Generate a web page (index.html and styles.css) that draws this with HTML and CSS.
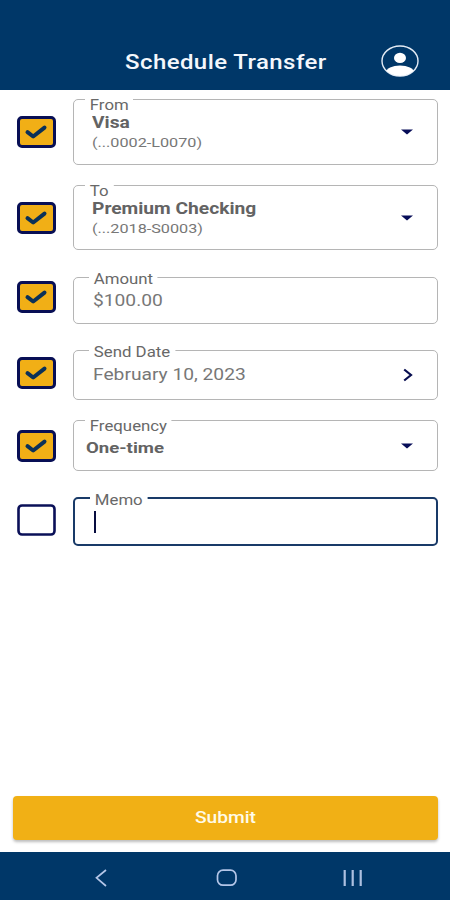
FILE: index.html
```html
<!DOCTYPE html>
<html lang="en">
<head>
<meta charset="utf-8">
<title>Schedule Transfer</title>
<link rel="stylesheet" href="styles.css">
</head>
<body>
<svg width="0" height="0" class="defs">
  <symbol id="check" viewBox="0 0 39 32"><rect x="1.5" y="1.5" width="36" height="29" rx="3.5" fill="#f1af16" stroke="#080f55" stroke-width="3"/><path d="M10.5 16.2L16.2 20.5L27.5 11.6" fill="none" stroke="#0b3158" stroke-width="4" stroke-linecap="round" stroke-linejoin="round"/></symbol>
  <symbol id="empty" viewBox="0 0 39 32"><rect x="1.5" y="1.5" width="36" height="29" rx="3.5" fill="#fff" stroke="#0a1058" stroke-width="2.6"/></symbol>
  <symbol id="down" viewBox="0 0 12 6"><path d="M0 .4H12L6 5.6Z" fill="#070d58"/></symbol>
</svg>
<header class="header">
  <h1 class="title wide">Schedule Transfer</h1>
  <svg class="avatar" viewBox="0 0 38 32"><defs><clipPath id="disc"><ellipse cx="19" cy="16" rx="18" ry="15"/></clipPath></defs><ellipse cx="19" cy="16" rx="18" ry="15" fill="none" stroke="#e3ebf5" stroke-width="1.4"/><ellipse cx="19" cy="12.9" rx="6" ry="5.2" fill="#fff"/><ellipse cx="19" cy="27.3" rx="14" ry="6.8" fill="#fff" clip-path="url(#disc)"/></svg>
</header>
<main class="form">
  <div class="row from">
    <svg class="box"><use href="#check"/></svg>
    <div class="field"><span class="label wide">From</span><div class="text"><b class="value wide">Visa</b><span class="sub wide">(...0002-L0070)</span></div><svg class="down"><use href="#down"/></svg></div>
  </div>
  <div class="row to">
    <svg class="box"><use href="#check"/></svg>
    <div class="field"><span class="label wide">To</span><div class="text"><b class="value wide">Premium Checking</b><span class="sub wide">(...2018-S0003)</span></div><svg class="down"><use href="#down"/></svg></div>
  </div>
  <div class="row amount">
    <svg class="box"><use href="#check"/></svg>
    <div class="field"><span class="label wide">Amount</span><div class="text"><span class="value wide">$100.00</span></div></div>
  </div>
  <div class="row date">
    <svg class="box"><use href="#check"/></svg>
    <div class="field"><span class="label wide">Send Date</span><div class="text"><span class="value wide">February 10, 2023</span></div><svg class="next" viewBox="0 0 10 14"><path d="M1.2 1.5L8 7L1.2 12.5" fill="none" stroke="#070d50" stroke-width="2.2"/></svg></div>
  </div>
  <div class="row frequency">
    <svg class="box"><use href="#check"/></svg>
    <div class="field"><span class="label wide">Frequency</span><div class="text"><b class="value wide">One-time</b></div><svg class="down"><use href="#down"/></svg></div>
  </div>
  <div class="row memo">
    <svg class="box"><use href="#empty"/></svg>
    <div class="field"><span class="label wide">Memo</span><i class="caret"></i></div>
  </div>
</main>
<button class="submit"><span class="wide">Submit</span></button>
<nav class="nav">
  <svg viewBox="0 0 12 18"><path d="M11 1L1.5 8.8L11 17" fill="none" stroke="#b4c6e8" stroke-width="1.7"/></svg>
  <svg class="home" viewBox="0 0 22 18"><rect x="1.5" y="1.2" width="18.5" height="15" rx="5.5" fill="none" stroke="#b4c6e8" stroke-width="1.7"/></svg>
  <svg class="recent" viewBox="0 0 20 18"><path d="M1.7 1V17M9.7 1V17M17.7 1V17" stroke="#adc0e0" stroke-width="2.2"/></svg>
</nav>
</body>
</html>
```
FILE: styles.css
```css
* { box-sizing: border-box; }
body { margin: 0; height: 900px; display: flex; flex-direction: column; background: #fff; font-family: Roboto, sans-serif; color: #636363; }
svg { display: block; flex: none; }
.defs { position: absolute; }
.wide { display: block; width: max-content; white-space: nowrap; transform: scaleX(1.2); transform-origin: left; }
.header { height: 90px; flex: none; background: #003768; display: flex; align-items: flex-start; padding: 45px 31px 0 125px; justify-content: space-between; }
.title { margin: 5px 0 0; font-size: 20px; line-height: 24px; font-weight: 500; letter-spacing: .35px; color: #f4f7fc; }
.avatar { width: 38px; height: 32px; }
.form { flex: 1; padding: 9px 12px 0 17px; }
.row { display: flex; align-items: center; gap: 17px; }
.box { width: 39px; height: 32px; }
.field { position: relative; width: 365px; height: 100%; border: 1.5px solid #b5b5b5; border-radius: 5px; display: flex; justify-content: space-between; align-items: center; padding: 0 24px 0 18px; }
.label { position: absolute; left: 11px; top: -4px; padding: 0 4px; background: #fff; font-size: 14px; line-height: 18px; color: #686868; }
.value { font-size: 16px; line-height: 20px; }
.sub { font-size: 13.5px; line-height: 18px; color: #777; }
.down { width: 12px; height: 6px; }
.next { width: 10px; height: 14px; }
.from { height: 66px; }
.to { height: 65px; margin-top: 20px; }
.amount { height: 47px; margin-top: 27px; }
.date { height: 50px; margin-top: 26px; }
.frequency { height: 51px; margin-top: 20px; }
.memo { height: 49px; margin-top: 26px; }
.amount .label, .date .label, .memo .label { left: 15px; top: -8px; }
.amount .box { margin-bottom: 7px; }
.date .box { margin-bottom: 4px; }
.memo .box { margin-bottom: 3px; }
.amount .value, .date .value { color: #777; margin-left: 1px; }
.frequency .field { padding-left: 12px; }
.frequency .value { font-size: 15.5px; margin-top: 5px; }
.memo .field { border: 2px solid #193a68; }
.caret { width: 2px; height: 22px; margin-left: 1px; background: #080d40; }
.submit { width: 425px; height: 44px; flex: none; margin: 0 0 12px 13px; border: 0; border-radius: 4px; background: #f1b015; box-shadow: 0 2px 3px #0004; color: #fffbe8; font: 500 16px/20px Roboto, sans-serif; display: flex; justify-content: center; align-items: center; }
.submit .wide { transform-origin: center; }
.nav { height: 48px; flex: none; background: #003768; display: flex; align-items: center; padding: 3px 0 0 95px; }
.nav svg { width: 12px; height: 18px; }
.nav .home { width: 22px; margin-left: 109px; }
.nav .recent { width: 20px; margin-left: 105px; }
```
